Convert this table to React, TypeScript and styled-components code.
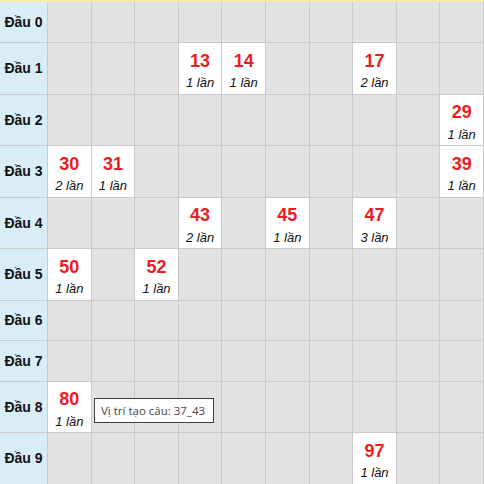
import React from 'react'
import styled, { createGlobalStyle } from 'styled-components'

const GlobalStyle = createGlobalStyle`
  html, body {
    margin: 0;
    padding: 0;
    background: #ffffff;
  }
  body {
    font-family: 'Liberation Sans', Arial, sans-serif;
  }
`

// số lần xuất hiện của từng cặp số
const HITS: Record<string, number> = {
  '13': 1,
  '14': 1,
  '17': 2,
  '29': 1,
  '30': 2,
  '31': 1,
  '39': 1,
  '43': 2,
  '45': 1,
  '47': 3,
  '50': 1,
  '52': 1,
  '80': 1,
  '97': 1
}

const DIGITS = [0, 1, 2, 3, 4, 5, 6, 7, 8, 9]

const Page = styled.div`
  position: relative;
  width: 484px;
`

const Board = styled.div`
  display: flex;
  flex-direction: column;
  gap: 1px;
  width: 483px;
  background: #cacaca;
  border-top: 2px solid #fce8a8;
  border-right: 1px solid #cacaca;
  border-bottom: 1px solid #cacaca;
`

const Row = styled.div<{ $tall: boolean; $first?: boolean }>`
  display: grid;
  grid-template-columns: 47px repeat(10, 1fr);
  gap: 1px;
  height: ${(p) => (p.$first ? '40px' : p.$tall ? '50.5px' : '39.5px')};
`

const HeadCell = styled.div`
  display: flex;
  align-items: center;
  justify-content: center;
  background: #d9edf7;
  color: #111111;
  font-size: 14px;
  font-weight: bold;
  white-space: nowrap;
`

const EmptyCell = styled.div`
  background: #e1e2e4;
`

const HitCell = styled.div`
  display: flex;
  flex-direction: column;
  align-items: center;
  background: #ffffff;
  padding-top: 7.5px;
  box-sizing: border-box;
`

const Number = styled.div`
  font-size: 18px;
  line-height: 20px;
  font-weight: bold;
  color: #ec1c24;
`

const Count = styled.div`
  margin-top: 4.5px;
  font-size: 13px;
  line-height: 16px;
  font-style: italic;
  color: #111111;
  white-space: nowrap;
`

const Tooltip = styled.div`
  position: absolute;
  left: 94px;
  top: 398px;
  width: 120px;
  height: 25px;
  box-sizing: border-box;
  display: flex;
  align-items: center;
  padding-left: 6px;
  background: #ffffff;
  border: 1px solid #3f3f3f;
  color: #484848;
  font-family: 'Open Sans', 'Noto Sans', sans-serif;
  font-size: 11.5px;
  white-space: nowrap;
`

export default function App() {
  return (
    <Page>
      <GlobalStyle />
      <Board>
        {DIGITS.map((head) => {
          const tall = DIGITS.some((tail) => HITS[`${head}${tail}`])
          return (
            <Row key={head} $tall={tall} $first={head === 0}>
              <HeadCell>Đầu {head}</HeadCell>
              {DIGITS.map((tail) => {
                const key = `${head}${tail}`
                const hits = HITS[key]
                if (!hits) return <EmptyCell key={key} />
                return (
                  <HitCell key={key}>
                    <Number>{key}</Number>
                    <Count>{hits} lần</Count>
                  </HitCell>
                )
              })}
            </Row>
          )
        })}
      </Board>
      <Tooltip>Vị trí tạo câu: 37_43</Tooltip>
    </Page>
  )
}
